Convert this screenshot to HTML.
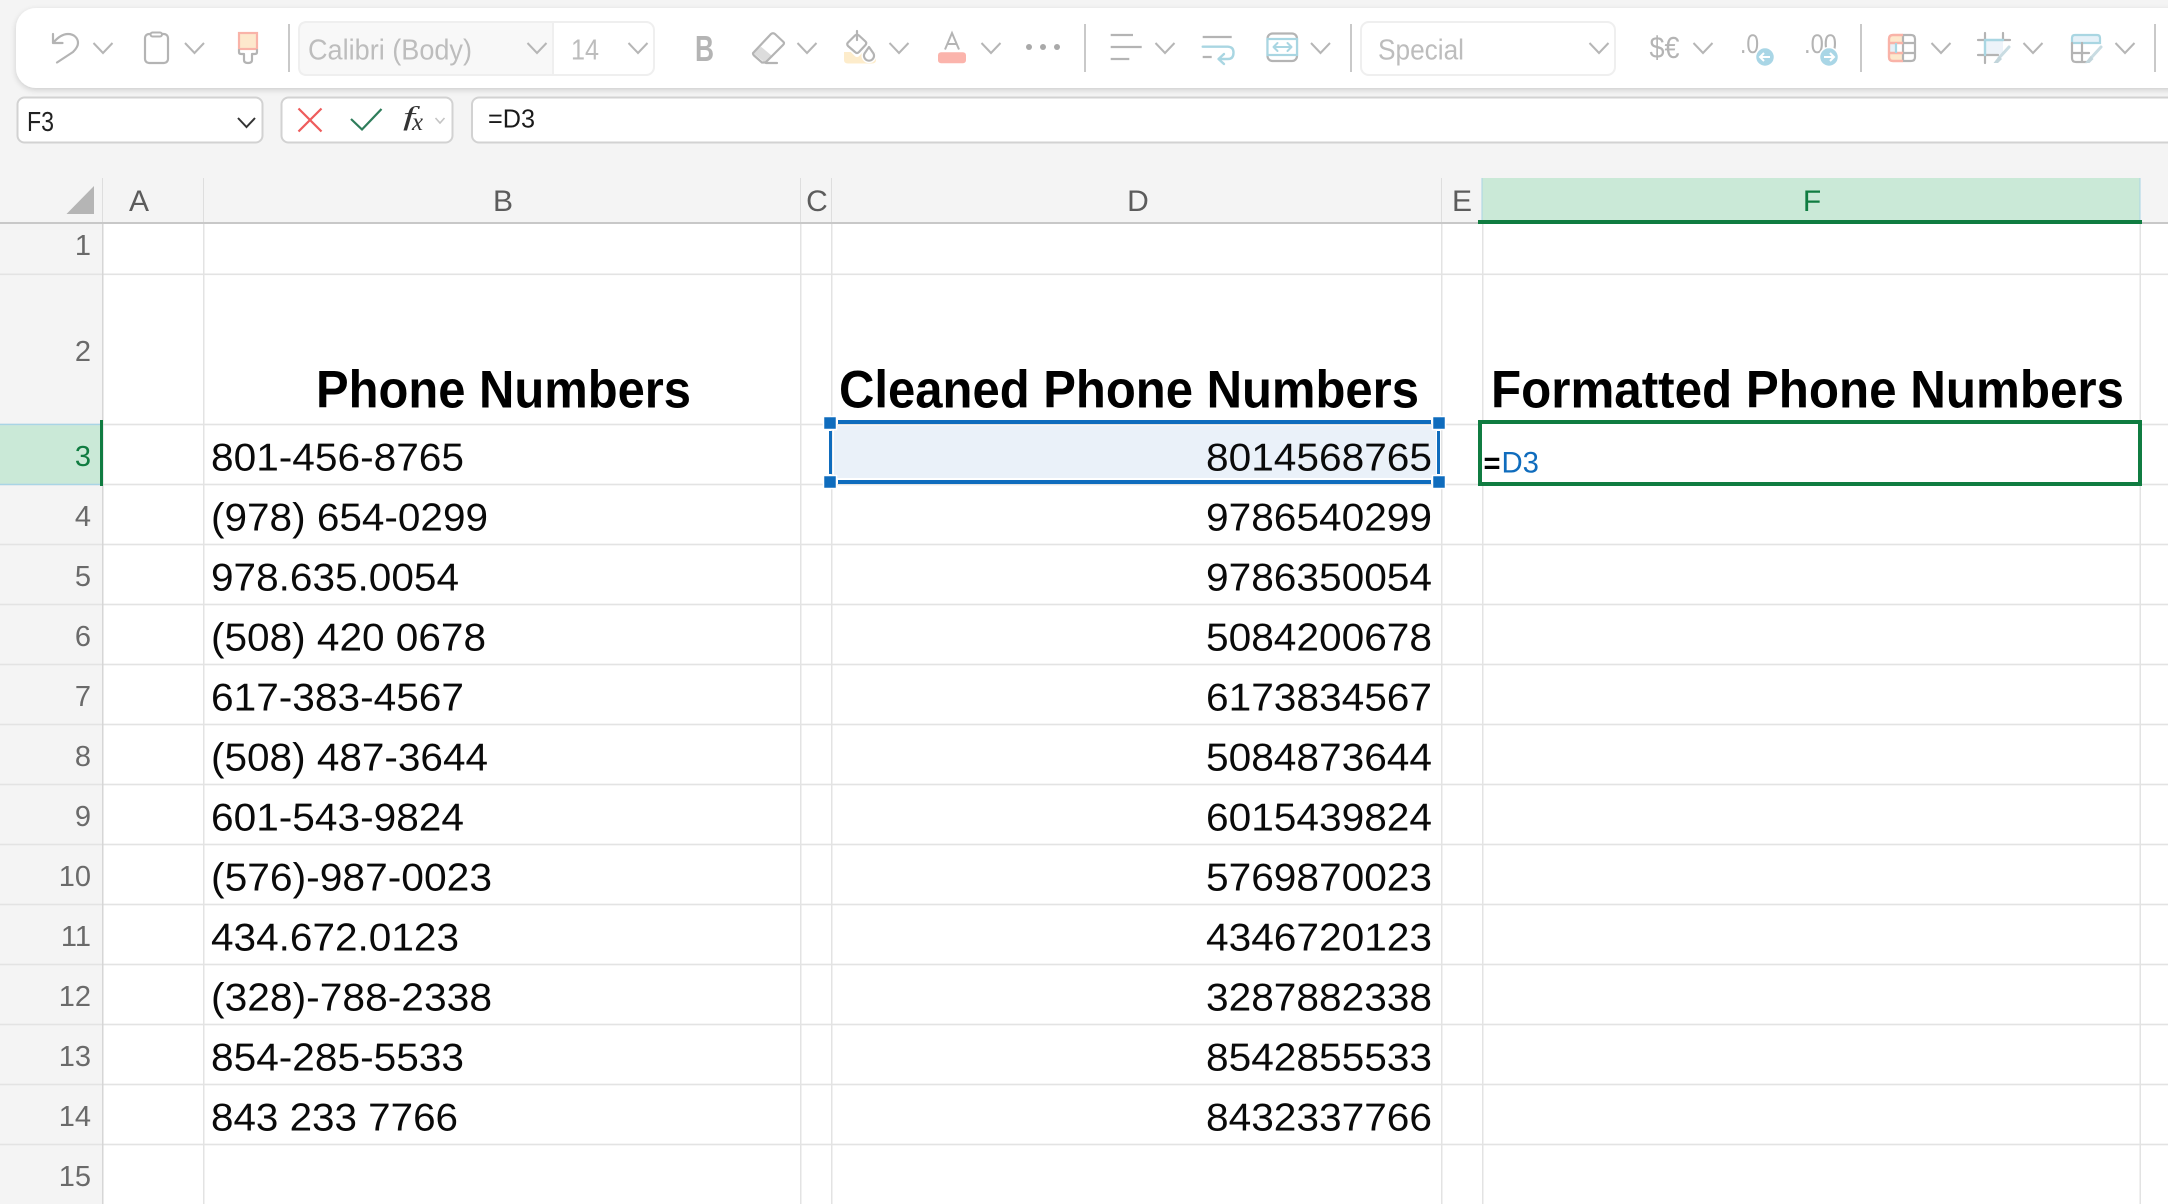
<!DOCTYPE html>
<html lang="en">
<head>
<meta charset="utf-8">
<title>Spreadsheet</title>
<style>
html,body{margin:0;padding:0;width:2168px;height:1204px;overflow:hidden;background:#f4f4f4}
svg{display:block}
text{font-family:"Liberation Sans",Arial,sans-serif}
.cell{font-size:39px;fill:#0a0a0a}
.hd{font-size:53px;font-weight:700;fill:#000}
.col{font-size:30px;fill:#5c5c5c;text-anchor:middle}
.row{font-size:29px;fill:#6a6a6a;text-anchor:end}
.tb{font-size:29px;fill:#bdbdbd}
.ic{fill:none;stroke:#b4b4b4;stroke-width:2.2;stroke-linecap:round;stroke-linejoin:round}
.bl{fill:none;stroke:#a9d6e2;stroke-width:2.4;stroke-linecap:round;stroke-linejoin:round}
.sep{fill:#c9c9c9}
</style>
</head>
<body>
<svg xmlns="http://www.w3.org/2000/svg" width="2168" height="1204" viewBox="0 0 2168 1204">
<defs>
<path id="c" d="M-9.500 -5 L0 5 L9.500 -5" fill="none" stroke="#b6b6b6" stroke-width="2"/>
<filter id="sh" x="-5%" y="-20%" width="110%" height="140%"><feDropShadow dx="0" dy="2" stdDeviation="3" flood-color="#000" flood-opacity=".16"/></filter>
</defs>
<rect width="2168" height="1204" fill="#f4f4f4"/>

<!-- toolbar -->
<rect x="16" y="8" width="2200" height="80" rx="20" fill="#fff" filter="url(#sh)"/>
<!-- undo -->
<path class="ic" d="M53 34V43H62.500M53 43C58 37 63 34 68 34C74 34 78 38 78 43C78 46 76 49 73 52L57 62.500"/>
<use href="#c" x="103" y="48"/>
<!-- clipboard -->
<rect class="ic" x="145" y="34" width="23" height="29" rx="4"/>
<rect x="150.500" y="32.500" width="11.500" height="4" rx="2" fill="#fff" stroke="#b4b4b4" stroke-width="2"/>
<use href="#c" x="194.500" y="48"/>
<!-- painter -->
<rect x="239" y="33" width="18" height="16" fill="#fde8cc" stroke="#f9b3a8" stroke-width="2.200"/>
<path class="ic" d="M239 50V52Q239 54 241 54H244V60Q244 63 248 63Q252 63 252 60V54H255Q257 54 257 52V50"/>
<rect class="sep" x="288" y="24" width="2" height="48"/>
<!-- font box -->
<rect x="299" y="22" width="355" height="53" rx="8" fill="#fff" stroke="#efefef" stroke-width="2"/>
<path d="M307 22H553V75H307Q299 75 299 67V30Q299 22 307 22Z" fill="#f8f8f8" stroke="#efefef" stroke-width="2"/>
<text class="tb" x="308" y="59.500" textLength="164" lengthAdjust="spacingAndGlyphs">Calibri (Body)</text>
<use href="#c" x="537" y="48"/>
<text class="tb" x="571" y="59.500" textLength="28" lengthAdjust="spacingAndGlyphs">14</text>
<use href="#c" x="638" y="48"/>
<text x="695" y="61" font-size="36" font-weight="700" fill="#b4b4b4" textLength="19" lengthAdjust="spacingAndGlyphs">B</text>
<!-- eraser -->
<path d="M753 53L761 46.700L773 56.700L765 62.700Z" fill="#dcdcdc"/>
<path class="ic" d="M771 34Q773 32.500 775 34L783 41.500Q785 43 783 45L765.500 62.500H762L754 55.500Q752 53.500 754 52Z"/>
<path class="ic" d="M766 63H777"/>
<use href="#c" x="807" y="48"/>
<!-- fill -->
<path d="M844 52H876V60Q876 63.500 872 63.500H848Q844 63.500 844 60Z" fill="#fdeccb"/>
<path d="M857 36L866 44L857 54L847 44Z" fill="#fff" stroke="#fff" stroke-width="6" stroke-linejoin="round"/>
<path class="ic" d="M857 31V40M855 35.500Q857 34 859 35.500L865.500 41.500Q867 43 865.500 45L859 52Q857 54 855 52L848 46Q846.500 44 848 42.500Z"/>
<path d="M869 47L873.500 53.500A5 5 0 1 1 864.500 53.500Z" fill="#fff" stroke="#fff" stroke-width="5" stroke-linejoin="round"/>
<path class="ic" d="M869 47L873.500 53.500A5 5 0 1 1 864.500 53.500Z"/>
<use href="#c" x="899" y="48"/>
<!-- font colour -->
<path d="M945 49.500L952 33L959 49.500M947.500 44H956.500" fill="none" stroke="#b4b4b4" stroke-width="2"/>
<rect x="938" y="52.300" width="28" height="11" rx="3" fill="#fbb4ac"/>
<use href="#c" x="991" y="48"/>
<circle cx="1029" cy="47" r="3" fill="#a9a9a9"/><circle cx="1043" cy="47" r="3" fill="#a9a9a9"/><circle cx="1057" cy="47" r="3" fill="#a9a9a9"/>
<rect class="sep" x="1084" y="24" width="2" height="48"/>
<!-- align -->
<path d="M1110.700 35H1133M1110.700 47H1141.700M1110.700 59H1129.300" fill="none" stroke="#b4b4b4" stroke-width="2.200"/>
<use href="#c" x="1165" y="48"/>
<!-- wrap -->
<path d="M1202.700 37H1231.700M1202.700 57H1211.700" fill="none" stroke="#b4b4b4" stroke-width="2.200"/>
<path class="bl" d="M1202.700 46.700H1228Q1233.500 47 1233.500 52.500Q1233.500 59 1228 59H1219M1224 54L1218.500 59L1224 64"/>
<!-- merge -->
<rect x="1267.500" y="33.500" width="29.500" height="27.500" rx="5" fill="none" stroke="#b4b4b4" stroke-width="2.200"/>
<rect x="1267.500" y="39" width="29.500" height="16" fill="#fff" stroke="#a9d6e2" stroke-width="2.200"/>
<path class="bl" style="stroke-width:2" d="M1273.500 47H1291.500M1277.500 43L1273.500 47L1277.500 51M1287.500 43L1291.500 47L1287.500 51"/>
<use href="#c" x="1320.500" y="48"/>
<rect class="sep" x="1350" y="24" width="2" height="48"/>
<!-- number format box -->
<rect x="1361" y="22" width="254" height="53" rx="8" fill="#fff" stroke="#efefef" stroke-width="2"/>
<text class="tb" x="1378" y="59.500" textLength="86" lengthAdjust="spacingAndGlyphs">Special</text>
<use href="#c" x="1599" y="48"/>
<text x="1649.500" y="58" font-size="31" fill="#b4b4b4" textLength="30" lengthAdjust="spacingAndGlyphs">$€</text>
<use href="#c" x="1703" y="48"/>
<text x="1740" y="53" font-size="27" fill="#b4b4b4" textLength="19" lengthAdjust="spacingAndGlyphs">.0</text>
<circle cx="1765" cy="57" r="9.500" fill="#a9d6e6" stroke="#fff" stroke-width="1.500"/>
<path d="M1770 57H1760.500M1764 53L1760 57L1764 61" fill="none" stroke="#fff" stroke-width="2"/>
<text x="1804" y="53" font-size="27" fill="#b4b4b4" textLength="33" lengthAdjust="spacingAndGlyphs">.00</text>
<circle cx="1829" cy="57" r="9.500" fill="#a9d6e6" stroke="#fff" stroke-width="1.500"/>
<path d="M1824 57H1833.500M1830 53L1834 57L1830 61" fill="none" stroke="#fff" stroke-width="2"/>
<rect class="sep" x="1860" y="24" width="2" height="48"/>
<!-- table format -->
<rect x="1889" y="35" width="14" height="8" fill="#fde8cc"/><rect x="1889" y="53" width="14" height="8" fill="#fde8cc"/>
<rect x="1889" y="43" width="7" height="10" fill="#e6f1f7"/>
<path class="ic" d="M1903 35H1911Q1915 35 1915 39V57Q1915 61 1911 61H1903M1903 35V61M1903 43H1915M1903 53H1915"/>
<path d="M1903 35H1893Q1889 35 1889 39V57Q1889 61 1893 61H1903M1889 43H1903M1889 53H1903" fill="none" stroke="#f9b3a8" stroke-width="2.400"/>
<path d="M1896 43V53" stroke="#a9d6e2" stroke-width="2.200"/>
<use href="#c" x="1941" y="48"/>
<!-- borders -->
<rect x="1985" y="41" width="18" height="14" fill="#edf3f9"/>
<path class="ic" d="M1985 33V40M1985 55V63M2003 33V40M1978 40H1985M2003 40H2010M1978 55H1998"/>
<path class="bl" d="M1985 40H2003M1985 40V55"/>
<path d="M2009 47L1999 58" stroke="#c9dce2" stroke-width="3" stroke-linecap="round"/>
<path d="M1999 56L2002 59L1998 63H1993.500Z" fill="#c2d5db"/>
<use href="#c" x="2033" y="48"/>
<!-- cell style -->
<path d="M2072 43V38Q2072 35 2075 35H2097Q2100 35 2100 38V43Z" fill="#e6f1f8" stroke="#a9d6e2" stroke-width="2.200"/>
<path class="ic" d="M2072 43V58Q2072 62 2076 62H2087M2072 53H2089M2082 43V62"/>
<path d="M2101 47L2091 58" stroke="#c9dce2" stroke-width="3" stroke-linecap="round"/>
<path d="M2090.500 56L2093.500 59L2089.500 63H2085Z" fill="#c2d5db"/>
<use href="#c" x="2125" y="48"/>
<rect class="sep" x="2154" y="24" width="2" height="48"/>

<!-- formula bar -->
<rect x="17.500" y="97.500" width="245" height="45" rx="7" fill="#fff" stroke="#d2d2d2" stroke-width="2"/>
<text x="27" y="131" font-size="28" fill="#222" textLength="27" lengthAdjust="spacingAndGlyphs">F3</text>
<path d="M238 118L246.500 127L255 118" fill="none" stroke="#333" stroke-width="2"/>
<rect x="281.500" y="97.500" width="171" height="45" rx="7" fill="#fff" stroke="#d2d2d2" stroke-width="2"/>
<path d="M298.500 108.500L321.500 131.500M321.500 108.500L298.500 131.500" stroke="#ee5c5c" stroke-width="2.200" fill="none"/>
<path d="M351 119L362 129.500L381.500 109" stroke="#2f7d5b" stroke-width="2.200" fill="none"/>
<text x="403" y="125" font-size="26" font-style="italic" fill="#333" style="font-family:'Liberation Serif',serif" textLength="12" lengthAdjust="spacingAndGlyphs">f</text>
<text x="412" y="130" font-size="25" font-style="italic" fill="#333" style="font-family:'Liberation Serif',serif" textLength="11" lengthAdjust="spacingAndGlyphs">x</text>
<path d="M435.500 118L440 123L444.500 118" fill="none" stroke="#c4c4c4" stroke-width="1.600"/>
<rect x="472" y="97.500" width="1780" height="45" rx="7" fill="#fff" stroke="#d2d2d2" stroke-width="2"/>
<text x="488" y="127.500" font-size="25.500" fill="#1a1a1a" textLength="47" lengthAdjust="spacingAndGlyphs">=D3</text>

<!-- column headers -->
<g fill="#dedede">
<rect x="102" y="178" width="1" height="46"/>
<rect x="203" y="178" width="1" height="46"/>
<rect x="800" y="178" width="1" height="46"/>
<rect x="831" y="178" width="1" height="46"/>
<rect x="1441" y="178" width="1" height="46"/>
</g>
<rect x="1482" y="178" width="658" height="43" fill="#cae9d7"/>
<rect x="1481.500" y="178" width="1" height="43" fill="#a9d5e5"/>
<rect x="2139.500" y="178" width="1" height="43" fill="#a9d5e5"/>
<path d="M66.500 214L94 214L94 186Z" fill="#b5b5b5"/>
<text class="col" x="139" y="211">A</text>
<text class="col" x="503" y="211">B</text>
<text class="col" x="817" y="211">C</text>
<text class="col" x="1138" y="211">D</text>
<text class="col" x="1462" y="211">E</text>
<text class="col" x="1812" y="211" style="fill:#107c41">F</text>

<!-- grid -->
<rect x="102" y="224" width="2066" height="980" fill="#fff"/>
<rect x="0" y="222" width="2168" height="2" fill="#c8c8c8"/>
<rect x="1478" y="220" width="664" height="4" fill="#107c41"/>
<rect x="0" y="424" width="100" height="60" fill="#cae9d7"/>
<g fill="#e3e3e3">
<rect x="0" y="273.500" width="2168" height="1.600"/>
<rect x="0" y="423.700" width="2168" height="1.600"/>
<rect x="0" y="483.700" width="2168" height="1.600"/>
<rect x="0" y="543.700" width="2168" height="1.600"/>
<rect x="0" y="603.700" width="2168" height="1.600"/>
<rect x="0" y="663.700" width="2168" height="1.600"/>
<rect x="0" y="723.700" width="2168" height="1.600"/>
<rect x="0" y="783.700" width="2168" height="1.600"/>
<rect x="0" y="843.700" width="2168" height="1.600"/>
<rect x="0" y="903.700" width="2168" height="1.600"/>
<rect x="0" y="963.700" width="2168" height="1.600"/>
<rect x="0" y="1023.700" width="2168" height="1.600"/>
<rect x="0" y="1083.700" width="2168" height="1.600"/>
<rect x="0" y="1143.700" width="2168" height="1.600"/>
<rect x="203" y="224" width="1.500" height="980"/>
<rect x="800" y="224" width="1.500" height="980"/>
<rect x="831" y="224" width="1.500" height="980"/>
<rect x="1441" y="224" width="1.500" height="980"/>
<rect x="1482" y="224" width="1.500" height="980"/>
<rect x="2139.500" y="224" width="1.500" height="980"/>
</g>
<rect x="102" y="224" width="1.500" height="980" fill="#d6d6d6"/>
<rect x="0" y="423.700" width="100" height="1.500" fill="#a9d5e5"/>
<rect x="0" y="483.700" width="100" height="1.500" fill="#a9d5e5"/>
<rect x="100" y="420" width="3" height="66" fill="#107c41"/>

<!-- row numbers -->
<text class="row" x="91" y="255">1</text>
<text class="row" x="91" y="361">2</text>
<text class="row" x="91" y="466" style="fill:#107c41">3</text>
<text class="row" x="91" y="526">4</text>
<text class="row" x="91" y="586">5</text>
<text class="row" x="91" y="646">6</text>
<text class="row" x="91" y="706">7</text>
<text class="row" x="91" y="766">8</text>
<text class="row" x="91" y="826">9</text>
<text class="row" x="91" y="886">10</text>
<text class="row" x="91" y="946">11</text>
<text class="row" x="91" y="1006">12</text>
<text class="row" x="91" y="1066">13</text>
<text class="row" x="91" y="1126">14</text>
<text class="row" x="91" y="1186">15</text>

<!-- D3 selection -->
<rect x="834" y="426" width="602" height="52" fill="#eaf1f9"/>
<rect x="838" y="420" width="593" height="4" fill="#0f6cbd"/>
<rect x="838" y="480" width="593" height="4" fill="#0f6cbd"/>
<rect x="829" y="431" width="3" height="43" fill="#0f6cbd"/>
<rect x="1437" y="431" width="3" height="43" fill="#0f6cbd"/>
<g fill="#0f6cbd" stroke="#fff" stroke-width="1.500">
<rect x="823.500" y="416.500" width="13" height="13"/>
<rect x="1432.500" y="416.500" width="13" height="13"/>
<rect x="823.500" y="475.500" width="13" height="13"/>
<rect x="1432.500" y="475.500" width="13" height="13"/>
</g>

<!-- F3 active -->
<rect x="1480" y="422" width="660" height="62" fill="#fff" stroke="#107c41" stroke-width="4"/>
<text x="1483.500" y="473" font-size="30" font-weight="700" fill="#000" textLength="17" lengthAdjust="spacingAndGlyphs">=</text>
<text x="1501.500" y="472.500" font-size="30" fill="#0f6cbd" textLength="37.500" lengthAdjust="spacingAndGlyphs">D3</text>

<g transform="translate(0,-0.700)">
<!-- headers -->
<text class="hd" x="316" y="408" textLength="375" lengthAdjust="spacingAndGlyphs">Phone Numbers</text>
<text class="hd" x="839" y="408" textLength="580" lengthAdjust="spacingAndGlyphs">Cleaned Phone Numbers</text>
<text class="hd" x="1491" y="408" textLength="633" lengthAdjust="spacingAndGlyphs">Formatted Phone Numbers</text>

<!-- column B -->
<text class="cell" x="211" y="471" textLength="253" lengthAdjust="spacingAndGlyphs">801-456-8765</text>
<text class="cell" x="211" y="531" textLength="277" lengthAdjust="spacingAndGlyphs">(978) 654-0299</text>
<text class="cell" x="211" y="591" textLength="248" lengthAdjust="spacingAndGlyphs">978.635.0054</text>
<text class="cell" x="211" y="651" textLength="275" lengthAdjust="spacingAndGlyphs">(508) 420 0678</text>
<text class="cell" x="211" y="711" textLength="253" lengthAdjust="spacingAndGlyphs">617-383-4567</text>
<text class="cell" x="211" y="771" textLength="277" lengthAdjust="spacingAndGlyphs">(508) 487-3644</text>
<text class="cell" x="211" y="831" textLength="253" lengthAdjust="spacingAndGlyphs">601-543-9824</text>
<text class="cell" x="211" y="891" textLength="281" lengthAdjust="spacingAndGlyphs">(576)-987-0023</text>
<text class="cell" x="211" y="951" textLength="248" lengthAdjust="spacingAndGlyphs">434.672.0123</text>
<text class="cell" x="211" y="1011" textLength="281" lengthAdjust="spacingAndGlyphs">(328)-788-2338</text>
<text class="cell" x="211" y="1071" textLength="253" lengthAdjust="spacingAndGlyphs">854-285-5533</text>
<text class="cell" x="211" y="1131" textLength="247" lengthAdjust="spacingAndGlyphs">843 233 7766</text>
<!-- column D -->
<text class="cell" x="1206" y="471" textLength="226" lengthAdjust="spacingAndGlyphs">8014568765</text>
<text class="cell" x="1206" y="531" textLength="226" lengthAdjust="spacingAndGlyphs">9786540299</text>
<text class="cell" x="1206" y="591" textLength="226" lengthAdjust="spacingAndGlyphs">9786350054</text>
<text class="cell" x="1206" y="651" textLength="226" lengthAdjust="spacingAndGlyphs">5084200678</text>
<text class="cell" x="1206" y="711" textLength="226" lengthAdjust="spacingAndGlyphs">6173834567</text>
<text class="cell" x="1206" y="771" textLength="226" lengthAdjust="spacingAndGlyphs">5084873644</text>
<text class="cell" x="1206" y="831" textLength="226" lengthAdjust="spacingAndGlyphs">6015439824</text>
<text class="cell" x="1206" y="891" textLength="226" lengthAdjust="spacingAndGlyphs">5769870023</text>
<text class="cell" x="1206" y="951" textLength="226" lengthAdjust="spacingAndGlyphs">4346720123</text>
<text class="cell" x="1206" y="1011" textLength="226" lengthAdjust="spacingAndGlyphs">3287882338</text>
<text class="cell" x="1206" y="1071" textLength="226" lengthAdjust="spacingAndGlyphs">8542855533</text>
<text class="cell" x="1206" y="1131" textLength="226" lengthAdjust="spacingAndGlyphs">8432337766</text>
</g>
</svg>
</body>
</html>
